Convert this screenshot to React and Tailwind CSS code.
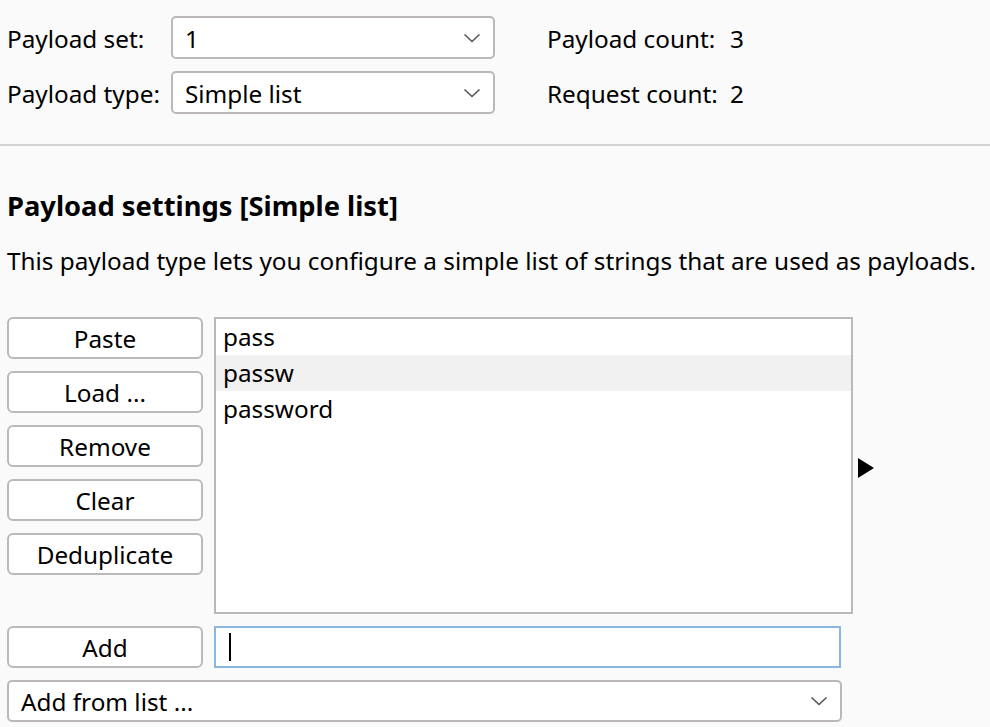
import React from 'react';

const font = { fontFamily: '"Noto Sans", "Open Sans", sans-serif' };

const Chevron = () => (
  <svg width="18" height="10" viewBox="0 0 18 10" className="shrink-0">
    <path d="M1.5 1.5 L9 8.5 L16.5 1.5" fill="none" stroke="#555" strokeWidth="1.6" />
  </svg>
);

const Select = ({ value, className = '' }) => (
  <div
    className={`flex items-center justify-between bg-white border-2 border-[#bcb8b8] rounded-[5px] pl-[12px] pr-[12px] ${className}`}
  >
    <span className="pt-[3px]">{value}</span>
    <Chevron />
  </div>
);

const Button = ({ children }) => (
  <button className="w-[196px] h-[42px] bg-white border-2 border-[#bdb9b9] rounded-[6px] text-center text-black leading-none pt-[3px]">
    {children}
  </button>
);

const items = ['pass', 'passw', 'password'];

export default function App() {
  return (
    <div className="w-[990px] h-[727px] bg-[#fafafa] text-black text-[24.3px] overflow-hidden" style={font}>
      <div className="pt-[16px] pb-[30px] pl-[7px] flex">
        <div className="flex flex-col gap-[12px]">
          <div className="flex items-center">
            <span className="w-[164px] pt-[3px]">Payload set:</span>
            <Select value="1" className="w-[324px] h-[43px]" />
          </div>
          <div className="flex items-center">
            <span className="w-[164px] pt-[3px]">Payload type:</span>
            <Select value="Simple list" className="w-[324px] h-[43px]" />
          </div>
        </div>
        <div className="ml-[52px] flex flex-col gap-[12px]">
          <div className="h-[43px] flex items-center pt-[3px]">
            <span className="w-[183px]">Payload count:</span>
            <span>3</span>
          </div>
          <div className="h-[43px] flex items-center pt-[3px]">
            <span className="w-[183px]">Request count:</span>
            <span>2</span>
          </div>
        </div>
      </div>
      <div className="h-[2px] bg-[#d4d4d4]" />
      <div className="pl-[7px] pt-[42px]">
        <h2 className="font-bold text-[27.3px] leading-[36px] whitespace-nowrap">Payload settings [Simple list]</h2>
        <p className="mt-[21px] leading-[32px] whitespace-nowrap">
          This payload type lets you configure a simple list of strings that are used as payloads.
        </p>
        <div className="mt-[40px] flex gap-[11px]">
          <div className="flex flex-col gap-[12px]">
            <Button>Paste</Button>
            <Button>Load ...</Button>
            <Button>Remove</Button>
            <Button>Clear</Button>
            <Button>Deduplicate</Button>
          </div>
          <div className="w-[639px] h-[297px] bg-white border-2 border-[#bcb8b8]">
            {items.map((it, i) => (
              <div
                key={it}
                className={`h-[36px] pl-[7px] flex items-center ${i === 1 ? 'bg-[#f1f1f1]' : ''}`}
              >
                {it}
              </div>
            ))}
          </div>
          <div className="flex items-center -ml-[6px] pt-[4px]">
            <svg width="16" height="20" viewBox="0 0 16 20">
              <path d="M0 0 L16 10 L0 20 Z" fill="#000" />
            </svg>
          </div>
        </div>
        <div className="mt-[12px] flex gap-[11px] items-center">
          <Button>Add</Button>
          <div className="w-[627px] h-[42px] bg-white border-2 border-[#8cb6e2] flex items-center pl-[13px]">
            <span className="w-[2px] h-[28px] bg-black" />
          </div>
        </div>
        <div className="mt-[12px]">
          <Select value="Add from list ..." className="w-[835px] h-[42px]" />
        </div>
      </div>
    </div>
  );
}
